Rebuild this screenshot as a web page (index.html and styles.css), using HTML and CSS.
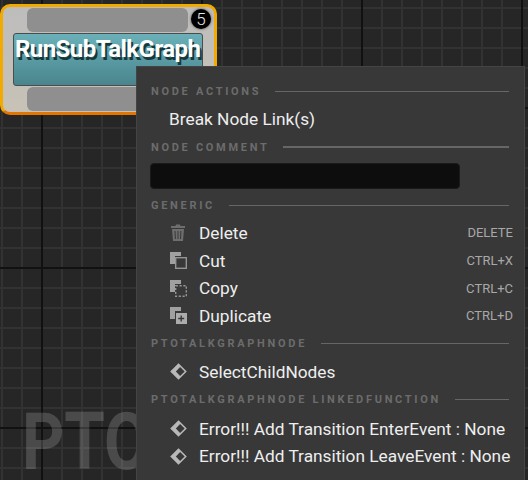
FILE: index.html
```html
<!DOCTYPE html>
<html lang="en">
<head>
    <meta charset="UTF-8">
    <title>Talk graph context menu</title>
    <link rel="stylesheet" href="styles.css">
</head>
<body>
    <div class="graph">
        <div class="graph-watermark">PTO</div>

        <div class="node">
            <div class="node-pin node-pin--top"></div>
            <div class="node-title"><span class="node-title-text">RunSubTalkGraph</span></div>
            <div class="node-pin node-pin--bottom"></div>
            <div class="node-badge">5</div>
        </div>

        <div class="menu">
            <div class="menu-heading"><span>NODE ACTIONS</span><i></i></div>
            <div class="menu-item menu-item--plain"><span class="menu-label">Break Node Link(s)</span></div>

            <div class="menu-heading"><span>NODE COMMENT</span><i class="thick"></i></div>
            <div class="menu-comment"></div>

            <div class="menu-heading"><span>GENERIC</span><i></i></div>
            <div class="menu-item">
                <svg class="menu-icon" viewBox="0 0 17 17"><path fill="#6e6e6e" fill-rule="evenodd" d="M5.500 2 6 .5h4L10.500 2H15v2H1V2zM2 5h12l-1 12H3zm2.500 2 .4 8h1l-.4-8zm3 0v8h1V7zm2.900 0-.4 8h1l.4-8z"/></svg>
                <span class="menu-label">Delete</span><span class="menu-key">DELETE</span>
            </div>
            <div class="menu-item">
                <svg class="menu-icon" viewBox="0 0 17 17"><path fill="#a0a0a0" d="M0 0h11v4H5v8H0z"/><rect x="5.700" y="5.700" width="10.600" height="10.600" fill="none" stroke="#949494" stroke-width="1.400"/></svg>
                <span class="menu-label">Cut</span><span class="menu-key">CTRL+X</span>
            </div>
            <div class="menu-item">
                <svg class="menu-icon" viewBox="0 0 17 17"><path fill="#a0a0a0" d="M0 0h11v4H5v8H0z"/><rect x="5.700" y="5.700" width="10.600" height="10.600" fill="none" stroke="#949494" stroke-width="1.400" stroke-dasharray="2.200 1.600"/></svg>
                <span class="menu-label">Copy</span><span class="menu-key">CTRL+C</span>
            </div>
            <div class="menu-item">
                <svg class="menu-icon" viewBox="0 0 17 17"><path fill="#a0a0a0" d="M0 0h11v4H5v8H0z"/><path fill="#acacac" fill-rule="evenodd" d="M6 6h11v11H6zm4.500 2.500v2.300H8.200v1.400h2.300v2.300h1.400v-2.300h2.300v-1.400h-2.300V8.500z"/></svg>
                <span class="menu-label">Duplicate</span><span class="menu-key">CTRL+D</span>
            </div>

            <div class="menu-heading"><span>PTOTALKGRAPHNODE</span><i></i></div>
            <div class="menu-item">
                <svg class="menu-icon" viewBox="0 0 16 16"><path fill="#b8b8b8" fill-rule="evenodd" d="M8 .2 15.800 8 8 15.800.2 8zM5.500 8l4 4.200L13.800 8 9.500 3.800z"/></svg>
                <span class="menu-label">SelectChildNodes</span>
            </div>

            <div class="menu-heading menu-heading--last"><span>PTOTALKGRAPHNODE LINKEDFUNCTION</span><i></i></div>
            <div class="menu-item">
                <svg class="menu-icon" viewBox="0 0 16 16"><path fill="#b8b8b8" fill-rule="evenodd" d="M8 .2 15.800 8 8 15.800.2 8zM5.500 8l4 4.200L13.800 8 9.500 3.800z"/></svg>
                <span class="menu-label">Error!!! Add Transition EnterEvent : None</span>
            </div>
            <div class="menu-item">
                <svg class="menu-icon" viewBox="0 0 16 16"><path fill="#b8b8b8" fill-rule="evenodd" d="M8 .2 15.800 8 8 15.800.2 8zM5.500 8l4 4.200L13.800 8 9.500 3.800z"/></svg>
                <span class="menu-label">Error!!! Add Transition LeaveEvent : None</span>
            </div>
        </div>
    </div>
</body>
</html>
```

FILE: styles.css
```css
* {
    box-sizing: border-box;
}

html, body {
    margin: 0;
    height: 100%;
    overflow: hidden;
}

body {
    font-family: Roboto, "Liberation Sans", sans-serif;
}

.graph {
    position: relative;
    width: 528px;
    height: 480px;
    overflow: hidden;
    background-color: #262626;
    background-image:
        linear-gradient(to right, #111 2px, transparent 2px),
        linear-gradient(to bottom, #111 2px, transparent 2px),
        linear-gradient(to right, #323232 2px, transparent 2px),
        linear-gradient(to bottom, #323232 2px, transparent 2px);
    background-size: 160px 160px, 160px 160px, 20px 20px, 20px 20px;
    background-position: 41px 0, 0 107px, 1px 0, 0 7px;
}

.graph-watermark {
    position: absolute;
    left: 22px;
    top: 404px;
    font-size: 80px;
    line-height: 76px;
    font-weight: 700;
    color: rgba(255, 255, 255, 0.17);
    white-space: nowrap;
    transform: scaleX(0.82);
    transform-origin: left top;
}

.node {
    position: absolute;
    left: 0;
    top: 4px;
    width: 217px;
    height: 111px;
    padding: 1px 11px 1px 10px;
    display: flex;
    flex-direction: column;
    border: 3px solid #f3aa00;
    border-bottom-color: #e27600;
    border-radius: 10px;
    background: linear-gradient(#bdbdbd, #c8c2b6);
}

.node-pin {
    height: 24px;
    margin: 0 15px 0 14px;
    background: #8f8f8f;
    border-radius: 6px;
}

.node-title {
    height: 54px;
    margin: 1px 0;
    padding: 0 1px;
    background: linear-gradient(#6ab0b8, #4a858d);
    border: 1px solid #4c4c4c;
    border-radius: 3px;
}

.node-title-text {
    display: block;
    font-size: 24px;
    font-weight: 700;
    line-height: 27px;
    margin-top: 2px;
    color: #fff;
    letter-spacing: -0.55px;
    white-space: nowrap;
    text-shadow: 2px 3px 0 #17393d;
}

.node-badge {
    position: absolute;
    left: 188px;
    top: 2px;
    width: 20px;
    height: 20px;
    border-radius: 50%;
    background: #000;
    box-shadow: 0 0 3px rgba(0, 0, 0, 0.6);
    color: #e8e8e8;
    font-size: 17px;
    font-weight: 300;
    line-height: 20px;
    text-align: center;
}

.menu {
    position: absolute;
    left: 136px;
    top: 66px;
    width: 389px;
    height: 414px;
    padding: 10px 11px 0 14px;
    background: #383838;
    border: 1px solid #444;
    border-bottom: 0;
}

.menu-heading {
    display: flex;
    align-items: center;
    gap: 14px;
    height: 28px;
    padding-right: 4px;
    font-size: 11px;
    font-weight: 700;
    letter-spacing: 2.7px;
    color: #6c6c6c;
    white-space: nowrap;
}

.menu-heading--last {
    margin-bottom: 1.5px;
}

.menu-heading i {
    flex: 1;
    height: 1px;
    background: #666;
}

.menu-heading i.thick {
    height: 2px;
}

.menu-item {
    display: flex;
    align-items: center;
    height: 27.7px;
    padding-left: 19px;
    color: #eee;
    font-size: 17.3px;
    white-space: nowrap;
}

.menu-item--plain {
    padding-left: 18px;
    height: 28px;
}

.menu-icon {
    width: 17px;
    height: 17px;
    margin-right: 12px;
    flex: none;
}

.menu-label {
    flex: 1;
}

.menu-key {
    font-size: 13px;
    color: #a8a8a8;
}

.menu-comment {
    width: 310px;
    height: 26px;
    margin: 2px 0 2px -1px;
    background: #0d0d0d;
    border: 1px solid #1a1a1a;
    border-radius: 4px;
}
```
